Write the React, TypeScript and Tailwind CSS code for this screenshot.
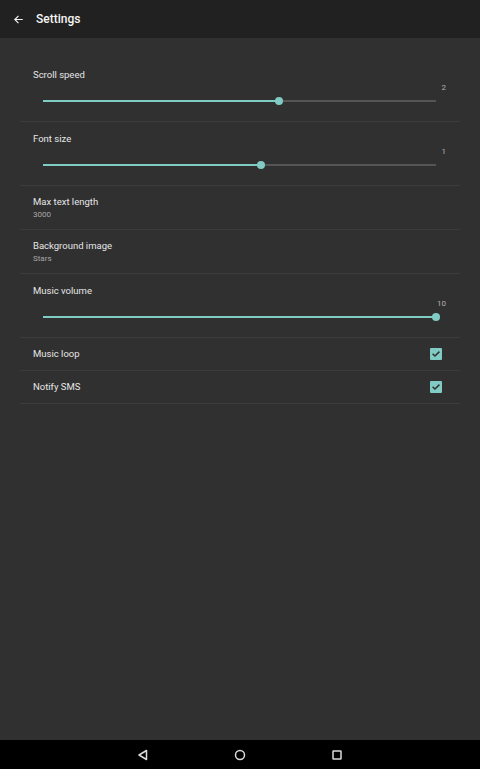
import React from "react";

type SliderPref = { kind: "slider"; title: string; value: number; max: number };
type TextPref = { kind: "text"; title: string; summary: string };
type CheckPref = { kind: "check"; title: string; checked: boolean };
type Pref = SliderPref | TextPref | CheckPref;

const prefs: Pref[] = [
  { kind: "slider", title: "Scroll speed", value: 2, max: 3.33 },
  { kind: "slider", title: "Font size", value: 1, max: 1.8 },
  { kind: "text", title: "Max text length", summary: "3000" },
  { kind: "text", title: "Background image", summary: "Stars" },
  { kind: "slider", title: "Music volume", value: 10, max: 10 },
  { kind: "check", title: "Music loop", checked: true },
  { kind: "check", title: "Notify SMS", checked: true },
];

function Slider({ value, max }: { value: number; max: number }) {
  const pct = Math.min(100, (value / max) * 100);
  return (
    <div className="relative ml-[10px] mr-[10px] mt-[2px] h-[10px]">
      <div className="absolute left-0 right-0 top-[4px] h-[2px] bg-[#555555]" />
      <div className="absolute left-0 top-[4px] h-[2px] bg-[#80cbc4]" style={{ width: `${pct}%` }} />
      <div
        className="absolute top-[1px] h-[8px] w-[8px] -translate-x-1/2 rounded-full bg-[#80cbc4]"
        style={{ left: `${pct}%` }}
      />
    </div>
  );
}

function Checkbox() {
  return (
    <div className="flex h-[12px] w-[12px] items-center justify-center rounded-[1px] bg-[#80cbc4]">
      <svg width="10" height="10" viewBox="0 0 24 24" fill="none" stroke="#303030" strokeWidth="3.5" strokeLinecap="square">
        <path d="M5 12.5l4.5 4.5L19 7.5" />
      </svg>
    </div>
  );
}

function Row({ pref }: { pref: Pref }) {
  if (pref.kind === "slider") {
    return (
      <div className="flex h-16 flex-col border-b border-[#3c3c3c] pl-[13px] pr-[14px]">
        <div className="mt-[11px] text-[9.5px] leading-[12px] text-[#e6e6e6]">{pref.title}</div>
        <div className="mt-[1px] text-right text-[8px] leading-[12px] text-[#b0b0b0]">{pref.value}</div>
        <Slider value={pref.value} max={pref.max} />
      </div>
    );
  }
  if (pref.kind === "text") {
    return (
      <div className="flex h-11 flex-col border-b border-[#3c3c3c] pl-[13px]">
        <div className="mt-[10px] text-[9.5px] leading-[12px] text-[#e6e6e6]">{pref.title}</div>
        <div className="mt-[1px] text-[8px] leading-[12px] text-[#a8a8a8]">{pref.summary}</div>
      </div>
    );
  }
  return (
    <div className="flex h-[33px] items-center justify-between border-b border-[#3c3c3c] pl-[13px] pr-[18px]">
      <div className="text-[9.5px] leading-[12px] text-[#e6e6e6]">{pref.title}</div>
      <Checkbox />
    </div>
  );
}

export default function App() {
  return (
    <div className="flex h-[769px] w-[480px] flex-col bg-[#303030]" style={{ fontFamily: "Roboto, 'Noto Sans', sans-serif" }}>
      {/* Toolbar */}
      <div className="flex h-[38px] items-center bg-[#212121] pl-[13px]">
        <svg width="11" height="11" viewBox="0 0 24 24" fill="none" stroke="#f0f0f0" strokeWidth="2.6" strokeLinecap="square">
          <path d="M20 12H5M11 5l-7 7 7 7" />
        </svg>
        <span className="ml-[12px] text-[12px] font-medium text-[#f5f5f5]">Settings</span>
      </div>

      {/* Preference list */}
      <div className="flex-1 px-5 pt-[20px]">
        {prefs.map((p) => (
          <Row key={p.title} pref={p} />
        ))}
      </div>

      {/* Navigation bar */}
      <div className="flex h-[29px] items-center justify-center gap-[85px] bg-black">
        <svg width="12" height="12" viewBox="0 0 12 12" fill="none" stroke="#dcdcdc" strokeWidth="1.5">
          <path d="M9.5 1.5v9L2 6z" strokeLinejoin="round" />
        </svg>
        <svg width="12" height="12" viewBox="0 0 12 12" fill="none" stroke="#dcdcdc" strokeWidth="1.5">
          <circle cx="6" cy="6" r="4.5" />
        </svg>
        <svg width="12" height="12" viewBox="0 0 12 12" fill="none" stroke="#dcdcdc" strokeWidth="1.5">
          <rect x="2" y="2" width="8" height="8" rx="0.5" />
        </svg>
      </div>
    </div>
  );
}
